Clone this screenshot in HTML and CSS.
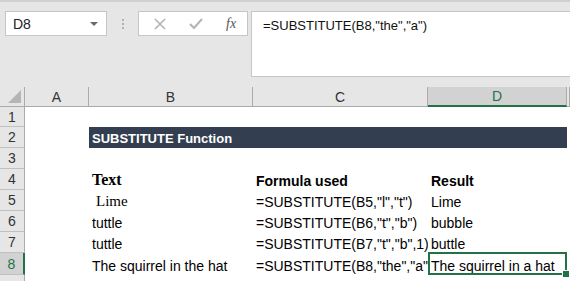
FILE: index.html
```html
<!DOCTYPE html>
<html>
<head>
<meta charset="utf-8">
<link rel="stylesheet" href="styles.css">
</head>
<body>
<div class="app">
  <div class="toolbar">
    <div class="namebox">
      <span class="name">D8</span>
      <span class="caret"></span>
    </div>
    <div class="grip"><span></span><span></span><span></span></div>
    <div class="fbuttons">
      <svg class="ico" width="14" height="14" viewBox="0 0 14 14"><path d="M2 2 L12 12 M12 2 L2 12" stroke="#b4b4b4" stroke-width="1.6" fill="none"/></svg>
      <svg class="ico" width="16" height="14" viewBox="0 0 16 14"><path d="M2 7 L6 11 L14 2" stroke="#b4b4b4" stroke-width="2" fill="none"/></svg>
      <span class="fx">fx</span>
    </div>
    <div class="formula">=SUBSTITUTE(B8,"the","a")</div>
  </div>
  <div class="sheet">
    <div class="hd corner"><span class="tri"></span></div>
    <div class="hd col">A</div>
    <div class="hd col">B</div>
    <div class="hd col">C</div>
    <div class="hd col sel">D</div>
    <div class="hd col"></div>

    <div class="hd row">1</div>
    <div class="c"></div><div class="c"></div><div class="c"></div><div class="c"></div><div class="c"></div>

    <div class="hd row">2</div>
    <div class="c"></div>
    <div class="c title">SUBSTITUTE Function</div>
    <div class="c title"></div>
    <div class="c title"></div>
    <div class="c"></div>

    <div class="hd row">3</div>
    <div class="c"></div><div class="c"></div><div class="c"></div><div class="c"></div><div class="c"></div>

    <div class="hd row">4</div>
    <div class="c"></div>
    <div class="c serif-b">Text</div>
    <div class="c b">Formula used</div>
    <div class="c b">Result</div>
    <div class="c"></div>

    <div class="hd row">5</div>
    <div class="c"></div>
    <div class="c serif">Lime</div>
    <div class="c">=SUBSTITUTE(B5,"l","t")</div>
    <div class="c">Lime</div>
    <div class="c"></div>

    <div class="hd row">6</div>
    <div class="c"></div>
    <div class="c">tuttle</div>
    <div class="c">=SUBSTITUTE(B6,"t","b")</div>
    <div class="c">bubble</div>
    <div class="c"></div>

    <div class="hd row">7</div>
    <div class="c"></div>
    <div class="c">tuttle</div>
    <div class="c">=SUBSTITUTE(B7,"t","b",1)</div>
    <div class="c">buttle</div>
    <div class="c"></div>

    <div class="hd row rsel">8</div>
    <div class="c"></div>
    <div class="c">The squirrel in the hat</div>
    <div class="c">=SUBSTITUTE(B8,"the","a"</div>
    <div class="c active">The squirrel in a hat</div>
    <div class="c"></div>

    <div class="hd row"></div>
    <div class="c"></div><div class="c"></div><div class="c"></div><div class="c"></div><div class="c"></div>
  </div>
</div>
</body>
</html>
```

FILE: styles.css
```css
* { box-sizing: border-box; }
html, body { margin: 0; padding: 0; }
body {
  width: 570px;
  height: 281px;
  overflow: hidden;
  background: #fff;
  font-family: "Liberation Sans", Arial, sans-serif;
}
.app { width: 570px; }

.toolbar {
  height: 87px;
  background: #e6e6e6;
  border-top: 2px solid #d0d0d0;
  display: flex;
  align-items: flex-start;
  padding-top: 9px;
  padding-left: 5px;
}
.namebox {
  width: 102px;
  height: 25px;
  background: #fff;
  border: 1px solid #c6c6c6;
  display: flex;
  align-items: center;
  justify-content: space-between;
  padding: 0 8px 0 7px;
}
.name { font-size: 14px; color: #222; }
.caret {
  width: 0; height: 0;
  border-left: 4px solid transparent;
  border-right: 4px solid transparent;
  border-top: 4px solid #6a6a6a;
}
.grip {
  width: 31px;
  height: 25px;
  display: flex;
  flex-direction: column;
  align-items: center;
  justify-content: center;
  gap: 2px;
}
.grip span { width: 2px; height: 2px; background: #b0b0b0; }
.fbuttons {
  width: 110px;
  height: 25px;
  background: #fff;
  border: 1px solid #c6c6c6;
  display: flex;
  align-items: center;
  padding-left: 14px;
}
.fbuttons .ico:first-child { margin-right: 21px; }
.fbuttons .ico:nth-child(2) { margin-right: 22px; }
.fx {
  font-family: "Liberation Serif", serif;
  font-style: italic;
  font-size: 14px;
  color: #555;
}
.formula {
  margin-left: 3px;
  flex: 1;
  height: 66px;
  background: #fff;
  border: 1px solid #c6c6c6;
  border-right: none;
  padding: 6px 0 0 11px;
  font-size: 13px;
  color: #111;
}

.sheet {
  display: grid;
  grid-template-columns: 25px 64px 164px 175px 139px 3px;
  grid-template-rows: 20px 20px 21px 21px 21px 21px 21px 21px 22px 10px;
  font-size: 14px;
  color: #000;
}
.hd {
  background: #e6e6e6;
  color: #333;
  border-right: 1px solid #ababab;
  border-bottom: 1px solid #ababab;
  display: flex;
  align-items: center;
  justify-content: center;
  font-size: 14px;
}
.corner { position: relative; }
.tri {
  position: absolute;
  right: 3px;
  bottom: 3px;
  width: 0; height: 0;
  border-left: 13px solid transparent;
  border-bottom: 13px solid #b5b5b5;
}
.col.sel {
  background: #d2d2d2;
  border-bottom: 2px solid #217346;
  color: #217346;
}
.row { border-bottom-color: #c0c0c0; }
.row.rsel {
  background: #d2d2d2;
  border-right: 2px solid #217346;
  color: #217346;
}
.c {
  display: flex;
  align-items: flex-end;
  padding: 0 0 1px 3px;
  white-space: nowrap;
  overflow: hidden;
}
.title {
  background: #333f50;
  color: #fff;
  font-weight: bold;
  font-size: 13px;
  padding-bottom: 2px;
}
.b { font-weight: bold; }
.serif-b {
  font-family: "Liberation Serif", serif;
  font-weight: bold;
  font-size: 16px;
}
.serif {
  font-family: "Liberation Serif", serif;
  font-size: 15px;
  padding-left: 7px;
}
.active { position: relative; overflow: visible; }
.active::after {
  content: "";
  position: absolute;
  left: 0; top: -1px; right: 0; bottom: 0;
  border: 2px solid #217346;
}
.active::before {
  content: "";
  position: absolute;
  right: -3px; bottom: -3px;
  width: 6px; height: 6px;
  background: #217346;
  border: 1px solid #fff;
  z-index: 2;
}
```
